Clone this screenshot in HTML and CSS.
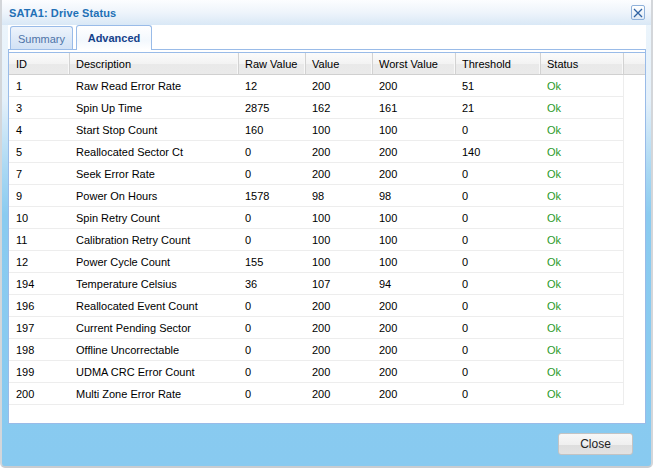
FILE: index.html
```html
<!DOCTYPE html>
<html>
<head>
<meta charset="utf-8">
<link rel="stylesheet" href="styles.css">
</head>
<body>
<div class="window">
  <div class="titlebar">
    <span class="title">SATA1: Drive Status</span>
    <span class="tool-close">
      <svg width="10" height="10" viewBox="0 0 10 10"><path d="M1 1 L9 9 M9 1 L1 9" stroke="#2f62a3" stroke-width="1.3" fill="none"/></svg>
    </span>
  </div>
  <div class="wbody">
    <div class="tabstrip">
      <div class="tab">Summary</div>
      <div class="tab active">Advanced</div>
    </div>
    <div class="spacer"></div>
    <div class="grid">
      <div class="ghead">
        <div class="hc c-id">ID</div>
        <div class="hc c-desc">Description</div>
        <div class="hc c-raw">Raw Value</div>
        <div class="hc c-val">Value</div>
        <div class="hc c-worst">Worst Value</div>
        <div class="hc c-thr">Threshold</div>
        <div class="hc c-st">Status</div>
        <div class="hc c-fill"></div>
      </div>
      <div class="gbody">
        <div class="row"><div class="c c-id">1</div><div class="c c-desc">Raw Read Error Rate</div><div class="c c-raw">12</div><div class="c c-val">200</div><div class="c c-worst">200</div><div class="c c-thr">51</div><div class="c c-st ok">Ok</div></div>
        <div class="row"><div class="c c-id">3</div><div class="c c-desc">Spin Up Time</div><div class="c c-raw">2875</div><div class="c c-val">162</div><div class="c c-worst">161</div><div class="c c-thr">21</div><div class="c c-st ok">Ok</div></div>
        <div class="row"><div class="c c-id">4</div><div class="c c-desc">Start Stop Count</div><div class="c c-raw">160</div><div class="c c-val">100</div><div class="c c-worst">100</div><div class="c c-thr">0</div><div class="c c-st ok">Ok</div></div>
        <div class="row"><div class="c c-id">5</div><div class="c c-desc">Reallocated Sector Ct</div><div class="c c-raw">0</div><div class="c c-val">200</div><div class="c c-worst">200</div><div class="c c-thr">140</div><div class="c c-st ok">Ok</div></div>
        <div class="row"><div class="c c-id">7</div><div class="c c-desc">Seek Error Rate</div><div class="c c-raw">0</div><div class="c c-val">200</div><div class="c c-worst">200</div><div class="c c-thr">0</div><div class="c c-st ok">Ok</div></div>
        <div class="row"><div class="c c-id">9</div><div class="c c-desc">Power On Hours</div><div class="c c-raw">1578</div><div class="c c-val">98</div><div class="c c-worst">98</div><div class="c c-thr">0</div><div class="c c-st ok">Ok</div></div>
        <div class="row"><div class="c c-id">10</div><div class="c c-desc">Spin Retry Count</div><div class="c c-raw">0</div><div class="c c-val">100</div><div class="c c-worst">100</div><div class="c c-thr">0</div><div class="c c-st ok">Ok</div></div>
        <div class="row"><div class="c c-id">11</div><div class="c c-desc">Calibration Retry Count</div><div class="c c-raw">0</div><div class="c c-val">100</div><div class="c c-worst">100</div><div class="c c-thr">0</div><div class="c c-st ok">Ok</div></div>
        <div class="row"><div class="c c-id">12</div><div class="c c-desc">Power Cycle Count</div><div class="c c-raw">155</div><div class="c c-val">100</div><div class="c c-worst">100</div><div class="c c-thr">0</div><div class="c c-st ok">Ok</div></div>
        <div class="row"><div class="c c-id">194</div><div class="c c-desc">Temperature Celsius</div><div class="c c-raw">36</div><div class="c c-val">107</div><div class="c c-worst">94</div><div class="c c-thr">0</div><div class="c c-st ok">Ok</div></div>
        <div class="row"><div class="c c-id">196</div><div class="c c-desc">Reallocated Event Count</div><div class="c c-raw">0</div><div class="c c-val">200</div><div class="c c-worst">200</div><div class="c c-thr">0</div><div class="c c-st ok">Ok</div></div>
        <div class="row"><div class="c c-id">197</div><div class="c c-desc">Current Pending Sector</div><div class="c c-raw">0</div><div class="c c-val">200</div><div class="c c-worst">200</div><div class="c c-thr">0</div><div class="c c-st ok">Ok</div></div>
        <div class="row"><div class="c c-id">198</div><div class="c c-desc">Offline Uncorrectable</div><div class="c c-raw">0</div><div class="c c-val">200</div><div class="c c-worst">200</div><div class="c c-thr">0</div><div class="c c-st ok">Ok</div></div>
        <div class="row"><div class="c c-id">199</div><div class="c c-desc">UDMA CRC Error Count</div><div class="c c-raw">0</div><div class="c c-val">200</div><div class="c c-worst">200</div><div class="c c-thr">0</div><div class="c c-st ok">Ok</div></div>
        <div class="row"><div class="c c-id">200</div><div class="c c-desc">Multi Zone Error Rate</div><div class="c c-raw">0</div><div class="c c-val">200</div><div class="c c-worst">200</div><div class="c c-thr">0</div><div class="c c-st ok">Ok</div></div>
      </div>
    </div>
    <div class="footer">
      <div class="btn">Close</div>
    </div>
  </div>
</div>
</body>
</html>
```

FILE: styles.css
```css
* { box-sizing: border-box; }
html, body { margin: 0; padding: 0; background: #ffffff; }
body { font-family: "Liberation Sans", Arial, sans-serif; font-size: 11px; color: #000; }

.window {
  width: 653px;
  height: 468px;
  border-left: 2px solid #d3d6da;
  border-right: 2px solid #d3d6da;
  border-bottom: 2px solid #c9ccd0;
  border-radius: 0 0 5px 5px;
  background: linear-gradient(to bottom, #eef6fc 0px, #e4f0fa 100px, #a9d8f3 170px, #8acbf0 215px, #88caf0 100%);
  display: flex;
  flex-direction: column;
}

.titlebar {
  height: 25px;
  flex: none;
  display: flex;
  align-items: center;
  justify-content: space-between;
  padding: 0 6px 0 7px;
  background: linear-gradient(to bottom, #fcfdff 0%, #eef4fb 50%, #d9e8f6 100%);
}
.title { font-weight: bold; font-size: 11px; color: #2270b6; letter-spacing: 0.1px; }
.tool-close {
  width: 14px; height: 15px;
  border: 1px solid #8fb1da;
  border-radius: 2px;
  background: linear-gradient(to bottom, #ffffff, #dfeaf6);
  display: flex; align-items: center; justify-content: center;
}
.tool-close svg { display: block; }

.wbody { flex: 1; display: flex; flex-direction: column; padding: 0 5px 0 6px; }

.tabstrip {
  height: 25px;
  background: #ffffff;
  border-bottom: 1px solid #99bbe8;
  display: flex;
  align-items: flex-end;
  gap: 3px;
  padding-left: 2px;
}
.tab {
  height: 23px;
  width: 63px;
  border: 1px solid #99bbe8;
  border-bottom: none;
  border-radius: 3px 3px 0 0;
  background: linear-gradient(to bottom, #eef4fc 0%, #dce8f7 60%, #d2e2f5 100%);
  color: #4e74a8;
  display: flex; align-items: center; justify-content: center;
  padding-top: 1px;
}
.tab.active {
  width: 76px;
  height: 25px;
  margin-bottom: -1px;
  background: linear-gradient(to bottom, #ffffff 0%, #f3f8fd 60%, #ffffff 100%);
  color: #15428b;
  font-weight: bold;
  padding-top: 0;
  padding-bottom: 1px;
}

.spacer { height: 2px; background: #fff; border-left: 1px solid #99bbe8; border-right: 1px solid #99bbe8; }

.grid {
  height: 372px;
  border: 1px solid #99bbe8;
  background: #ffffff;
  display: flex;
  flex-direction: column;
  flex: none;
}
.ghead {
  display: flex;
  height: 22px;
  border-bottom: 1px solid #d0d0d0;
  background: linear-gradient(to bottom, #fbfbfb 0%, #f3f3f3 50%, #e9e9e9 51%, #eaeaea 100%);
}
.hc {
  border-right: 1px solid #d2d2d2;
  box-shadow: inset -1px 0 0 #f8f8f8;
  padding-left: 6px;
  display: flex; align-items: center;
  height: 21px;
}
.hc.c-fill { border-right: none; box-shadow: none; flex: 1; }
.c-id { width: 61px; padding-left: 7px; }
.c-desc { width: 169px; }
.c-raw { width: 67px; }
.c-val { width: 67px; }
.c-worst { width: 83px; }
.c-thr { width: 85px; }
.c-st { width: 83px; }

.row {
  display: flex;
  width: 615px;
  height: 22px;
  border-bottom: 1px solid #ededed;
  border-right: 1px solid #ededed;
}
.c { padding-left: 6px; display: flex; align-items: center; height: 21px; }
.row .c-id { padding-left: 7px; }
.row .c-st { width: 82px; }
.ok { color: #2a9a2a; }

.footer { display: flex; justify-content: flex-end; padding: 9px 13px 0 0; }
.btn {
  width: 75px; height: 22px;
  border: 1px solid #c3c3c3;
  border-radius: 3px;
  background: linear-gradient(to bottom, #f7f7f7 0%, #efefef 55%, #dedede 56%, #e2e2e2 100%);
  color: #222;
  font-size: 12px;
  display: flex; align-items: center; justify-content: center;
}
```
